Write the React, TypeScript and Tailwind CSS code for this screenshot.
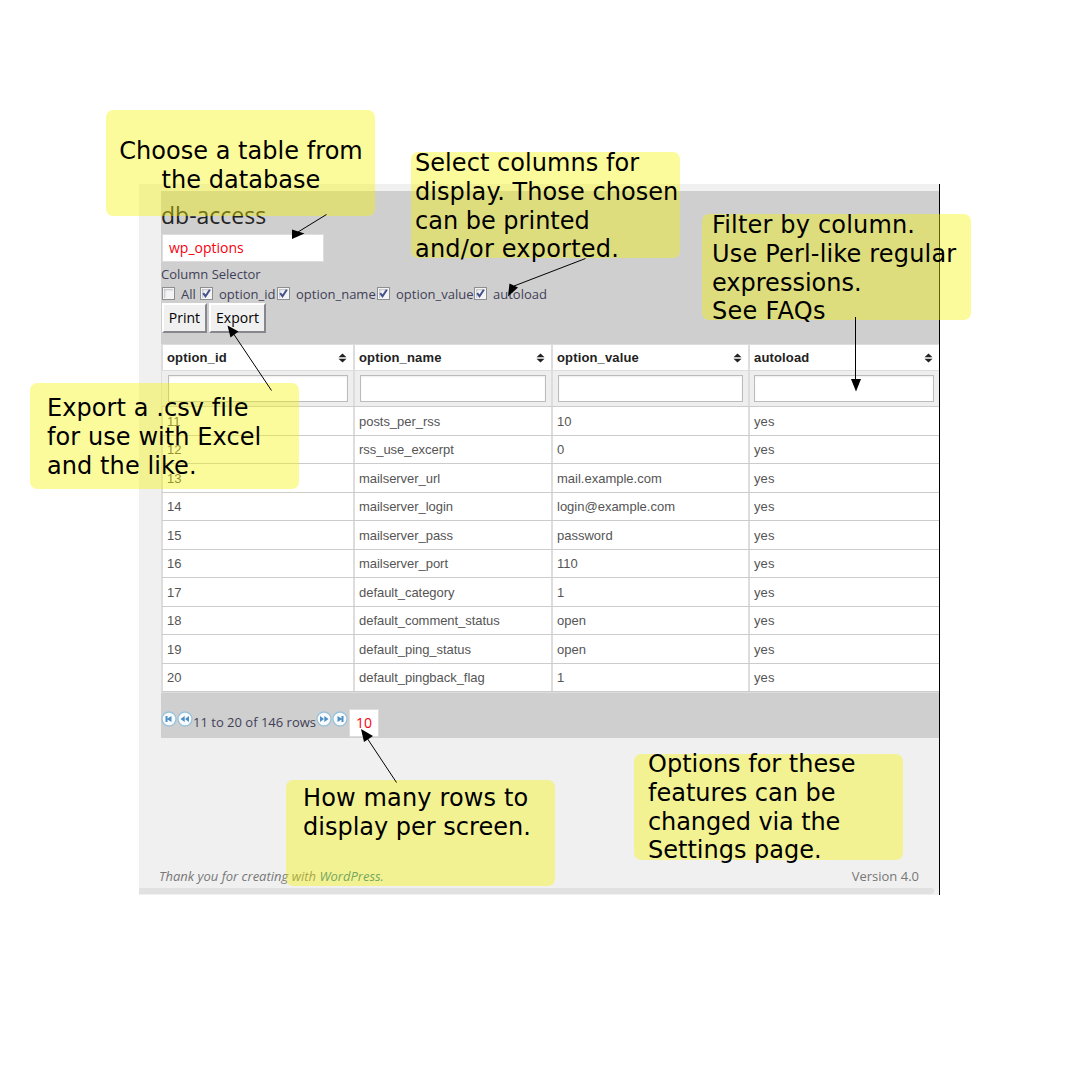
import React from "react";

const rows = [
  ["11", "posts_per_rss", "10"],
  ["12", "rss_use_excerpt", "0"],
  ["13", "mailserver_url", "mail.example.com"],
  ["14", "mailserver_login", "login@example.com"],
  ["15", "mailserver_pass", "password"],
  ["16", "mailserver_port", "110"],
  ["17", "default_category", "1"],
  ["18", "default_comment_status", "open"],
  ["19", "default_ping_status", "open"],
  ["20", "default_pingback_flag", "1"],
];

const columns = ["option_id", "option_name", "option_value", "autoload"];
const grid = "grid grid-cols-[193px_198px_197px_190px]";

function SortIcon() {
  return (
    <svg width="9" height="10" viewBox="0 0 9 10" className="mr-[6px] fill-[#222]">
      <path d="M4.5 0.5 8.5 4.2H0.5zM4.5 9.5 8.5 5.8H0.5z" />
    </svg>
  );
}

function Check({ label, on, box }: { label: string; on?: boolean; box: string }) {
  return (
    <label className={"flex items-start " + box}>
      <span className="mt-[2px] flex size-[13px] shrink-0 items-center justify-center border border-[#8b8f92] bg-[#f4f4f4] shadow-[inset_0_0_0_1px_#f4f4f4,inset_2px_2px_2px_#c0c0c4]">
        {on && (
          <svg width="9" height="9" viewBox="0 0 9 9" className="fill-none stroke-[#43508c]" strokeWidth="2">
            <path d="M1.2 4.2 3.5 7.2 7.8 0.8" />
          </svg>
        )}
      </span>
      <span className="ml-[6px] leading-[18px]">{label}</span>
    </label>
  );
}

function PagerIcon({ d }: { d: string }) {
  return (
    <svg width="16" height="16" viewBox="0 0 16 16" className="-mt-[8px]">
      <circle cx="8" cy="8" r="7" fill="#f8fbfd" stroke="#9cc2d8" strokeWidth="1.3" />
      <path d={d} fill="#4f8fc4" />
    </svg>
  );
}

function Note({ box, text, children }: { box: string; text: string; children: React.ReactNode }) {
  return (
    <div className={"absolute h-[106px] w-[269px] rounded-[7px] bg-[rgba(246,244,0,0.39)] " + box}>
      <p className={"absolute whitespace-nowrap font-['DejaVu_Sans',sans-serif] text-[24px] leading-[28.8px] text-black " + text}>
        {children}
      </p>
    </div>
  );
}

export default function App() {
  return (
    <div className="relative h-[1080px] w-[1080px] overflow-hidden bg-white pl-[139px] pt-[184px] font-['Open_Sans',sans-serif] text-[13px] text-[#3f3f58]">
      <main className="flex h-[711px] w-[801px] flex-col border-r border-black bg-[#f0f0f0] pt-[7px]">
        <section className="ml-[22px] h-[547px] bg-[#cfcfcf]">
          <div className="h-[153px] pt-[9px]">
            <h1 className="text-[23px] leading-[30px] text-[#222]">db-access</h1>
            <div className="ml-px mt-[4px] flex h-[28px] w-[162px] items-center border border-[#ddd] bg-white pb-[2px] pl-[6px] text-[14px] text-[#f80010]">
              wp_options
            </div>
            <div className="mt-[3px] h-[18px] leading-[18px]">Column Selector</div>
            <div className="ml-px mt-[2px] flex h-[17px]">
              <Check label="All" box="w-[38px]" />
              <Check label="option_id" on box="w-[77px]" />
              <Check label="option_name" on box="w-[100px]" />
              <Check label="option_value" on box="w-[97px]" />
              <Check label="autoload" on box="w-[80px]" />
            </div>
            <div className="ml-px mt-[1px] flex gap-[2px] text-[14px] text-black">
              <button className="h-[30px] w-[45px] border-2 border-b-[#85878c] border-l-white border-r-[#85878c] border-t-white bg-[#f0f0f0] leading-[24px]">Print</button>
              <button className="h-[30px] w-[57px] border-2 border-b-[#85878c] border-l-white border-r-[#85878c] border-t-white bg-[#f0f0f0] leading-[24px]">Export</button>
            </div>
          </div>

          <div className="h-[349px] border-b border-l-2 border-t border-[#ddd] bg-white font-['Liberation_Sans',sans-serif] text-[#555]">
            <div className={grid + " -ml-px h-[26px] border-b border-[#ddd] font-bold tracking-[0.15px] text-[#222]"}>
              {columns.map((c) => (
                <div key={c} className="flex items-center justify-between border-r-2 border-[#ddd] pl-[4px] first:pl-[5px] last:border-r-0 last:pr-px">
                  <span>{c}</span>
                  <SortIcon />
                </div>
              ))}
            </div>
            <div className={grid + " -ml-px h-[36px] border-b border-[#ccc] bg-[#eee]"}>
              {columns.map((c) => (
                <div key={c} className="border-r-2 border-[#ddd] pb-[4px] pl-[5px] pr-[5px] pt-[4px] first:pl-[6px] last:border-r-0 last:pl-[4px] last:pr-[6px]">
                  <input aria-label={c} className="block h-[27px] w-full border border-[#bbb] bg-white shadow-[inset_0_1px_2px_rgba(0,0,0,0.07)]" />
                </div>
              ))}
            </div>
            {rows.map((r) => (
              <div key={r[0]} className={grid + " -ml-px h-[28px] border-b border-[#ccc] odd:h-[29px] odd:[&_span]:pt-[2px]"}>
                {[...r, "yes"].map((v, i) => (
                  <div key={i} className="flex items-center border-r-2 border-[#ddd] pl-[4px] first:pl-[5px] last:border-r-0 nth-2:tracking-[-0.04px] last:tracking-[0.1px]">
                    <span>{v}</span>
                  </div>
                ))}
              </div>
            ))}
          </div>

          <div className="flex h-[45px] items-start pt-[16px]">
            <div className="flex h-[28px] items-center">
              <PagerIcon d="M4.5 5h2v2.4L10.5 5v6L6.5 8.6V11h-2z" />
              <PagerIcon d="M3.5 8 7.7 5v6zM8 8l4-3v6z" />
              <span className="w-[123px] whitespace-nowrap">11 to 20 of 146 rows</span>
              <PagerIcon d="M12.5 8 8.3 5v6zM8 8 4 5v6z" />
              <PagerIcon d="M11.5 5h-2v2.4L5.500 5v6L9.500 8.600V11h2z" />
              <span className="ml-px flex h-[28px] w-[30px] items-center justify-center border border-[#ddd] bg-white pb-[2px] text-[14px] text-[#f80010]">10</span>
            </div>
          </div>
        </section>
        <footer className="ml-[20px] mr-[20px] mt-auto flex h-[22px] items-center justify-between text-[#777]">
          <span className="italic">
            Thank you for creating with <span className="text-[#21759b]">WordPress.</span>
          </span>
          <span>Version 4.0</span>
        </footer>
        <div className="mb-px h-[6px] w-[795px] rounded-r-[3px] bg-[#e1e1e1]" />
      </main>

      <Note box="left-[106px] top-[110px]" text="left-px right-0 top-[27px] text-center tracking-[0.04px]">Choose a table from<br />the database</Note>
      <Note box="left-[411px] top-[152px]" text="left-[4px] top-[-3px] tracking-[0.06px]">Select columns for<br />display. Those chosen<br /><span className="tracking-normal">can be printed</span><br /><span className="tracking-[0.2px]">and/or exported.</span></Note>
      <Note box="left-[702px] top-[214px]" text="left-[10px] top-[-3px] tracking-[0.18px]">Filter by column.<br />Use Perl-like regular<br /><span className="tracking-normal">expressions.</span><br /><span className="tracking-[0.3px]">See FAQs</span></Note>
      <Note box="left-[30px] top-[383px]" text="left-[17px] top-[11px] tracking-[0.08px]">Export a .csv file<br />for use with Excel<br />and the like.</Note>
      <Note box="left-[286px] top-[780px]" text="left-[17px] top-[4px]"><span className="tracking-[0.15px]">How many rows to</span><br />display per screen.</Note>
      <Note box="left-[634px] top-[754px]" text="left-[14px] top-[-4px]">Options for these<br />features can be<br /><span className="tracking-[-0.1px]">changed via the</span><br />Settings page.</Note>

      <svg width="1080" height="1080" viewBox="0 0 1080 1080" className="pointer-events-none absolute left-0 top-0 fill-black stroke-black">
        <path d="M326.500 214.500 298 232M585.500 258.500 514 286M855.500 317V382M271.500 390.500 233 333M396.500 782.500 367 738" fill="none" />
        <g stroke="none">
          <path d="M292 229.500 304.500 233.500 292 239z" />
          <path d="M509.500 283.500 518 287.500 508 296.500z" />
          <path d="M851 379H861L856 391.500z" />
          <path d="M227.500 325.500 238.500 331.500 230.500 337.500z" />
          <path d="M361 729 373 736 364 742z" />
        </g>
      </svg>
    </div>
  );
}
